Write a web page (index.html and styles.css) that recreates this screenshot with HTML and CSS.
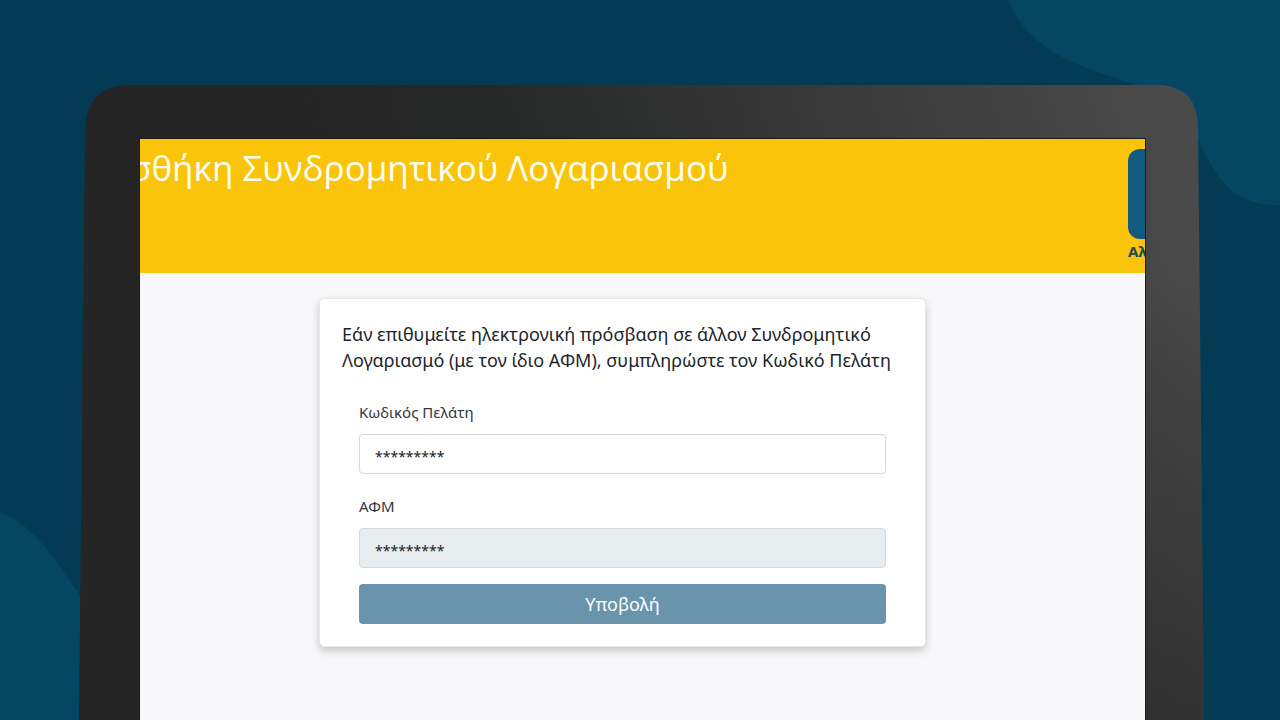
FILE: index.html
```
<!DOCTYPE html>
<html lang="el">
<head>
<meta charset="utf-8">
<meta name="viewport" content="width=device-width, initial-scale=1">
<title>Συνδρομητικός Λογαριασμός</title>
<link rel="stylesheet" href="styles.css">
</head>
<body>
<div class="stage">
  <svg class="backdrop" viewBox="0 0 1280 720" preserveAspectRatio="xMidYMin slice" aria-hidden="true">
    <path fill="#054763" d="M1008 0C1022 34 1050 54 1087 68C1120 81 1146 84 1170 104C1192 121 1199 144 1212 166C1226 190 1245 206 1280 205V0Z"/>
    <path fill="#054763" d="M0 512C25 522 43 542 58 564L79 594L110 640V720H0Z"/>
  </svg>
  <div class="device">
    <svg class="bezel" viewBox="0 0 1125 635" preserveAspectRatio="none" aria-hidden="true">
      <defs>
        <linearGradient id="bezel-fill" gradientUnits="userSpaceOnUse" x1="250" y1="160" x2="1050" y2="-90">
          <stop offset="0" stop-color="#252525"/>
          <stop offset="0.25" stop-color="#272828"/>
          <stop offset="0.7" stop-color="#3d3d3d"/>
          <stop offset="1" stop-color="#4a4a4a"/>
        </linearGradient>
        <linearGradient id="bezel-shade" x1="0" y1="0" x2="0" y2="1">
          <stop offset="0" stop-color="#252525" stop-opacity="0"/>
          <stop offset="0.3" stop-color="#252525" stop-opacity="0"/>
          <stop offset="1" stop-color="#252525" stop-opacity="0.55"/>
        </linearGradient>
      </defs>
      <path fill="url(#bezel-fill)" d="M46 0H1080Q1119 2 1119 43L1125 635H0L6 45Q7 3 46 0Z"/>
      <path fill="url(#bezel-shade)" d="M46 0H1080Q1119 2 1119 43L1125 635H0L6 45Q7 3 46 0Z"/>
    </svg>
    <div class="screen">
      <header class="banner">
        <h1 class="title">σθήκη Συνδρομητικού Λογαριασμού</h1>
        <button class="action" type="button"><span class="tile"></span><span class="action-label">Αλ</span></button>
      </header>
      <main class="content">
        <form class="card">
          <p class="intro">Εάν επιθυμείτε ηλεκτρονική πρόσβαση σε άλλον Συνδρομητικό Λογαριασμό (με τον ίδιο ΑΦΜ), συμπληρώστε τον Κωδικό Πελάτη</p>
          <div class="fields">
            <label class="label" for="code">Κωδικός Πελάτη</label>
            <input class="input" id="code" type="text" value="*********">
            <label class="label label-next" for="afm">ΑΦΜ</label>
            <input class="input input-locked" id="afm" type="text" value="*********" readonly>
            <button class="submit" type="button">Υποβολή</button>
          </div>
        </form>
      </main>
    </div>
  </div>
</div>
</body>
</html>
```
FILE: styles.css
```
* { box-sizing: border-box; }

body {
  margin: 0;
  font-family: "Noto Sans", "Open Sans", sans-serif;
  color: #212529;
  background: #033b55;
}

.stage {
  position: relative;
  display: flex;
  min-height: 100vh;
  padding: 85px 76px 0 79px;
  overflow: hidden;
}

.backdrop,
.bezel {
  position: absolute;
  inset: 0;
  width: 100%;
  height: 100%;
}

.device {
  position: relative;
  flex: 1;
  display: flex;
  min-width: 0;
  padding: 54px 59px 0 61px;
}

.screen {
  position: relative;
  flex: 1;
  min-width: 0;
  overflow: hidden;
  background: #f8f8fb;
  box-shadow: 0 0 0 1px #1c1a16;
}

.banner {
  display: flex;
  justify-content: space-between;
  align-items: flex-start;
  height: 134px;
  padding-top: 10px;
  background: #f9c409;
}

.title {
  margin: 0 0 0 -10px;
  font-family: "Open Sans", "Noto Sans", sans-serif;
  font-size: 35px;
  line-height: 38px;
  font-weight: 400;
  white-space: nowrap;
  color: #fffef2;
}

.action {
  display: flex;
  flex-direction: column;
  flex: none;
  gap: 2px;
  width: 90px;
  margin-right: -73px;
  padding: 0;
  border: 0;
  background: none;
  font-family: inherit;
  text-align: left;
  color: #1b4a5c;
}

.tile {
  height: 90px;
  border-radius: 12px;
  background: #115b80;
}

.action-label {
  font-size: 15px;
  line-height: 20px;
  font-weight: 700;
}

.content {
  display: flex;
  justify-content: center;
  padding: 25px 40px 40px 0;
}

.card {
  width: 100%;
  max-width: 607px;
  padding: 22px;
  border: 1px solid #e6e7e8;
  border-radius: 5px;
  background: #fff;
  box-shadow: 0 4px 8px rgba(0, 0, 0, 0.2);
}

.intro {
  margin: 0;
  font-size: 18px;
  line-height: 26px;
}

.fields {
  display: flex;
  flex-direction: column;
  padding: 27px 17px 0 17px;
}

.label {
  margin-bottom: 10px;
  font-size: 15px;
  line-height: 24px;
  color: #33373a;
}

.label-next { margin-top: 20px; }

.input {
  width: 100%;
  height: 40px;
  padding: 4px 15px 0;
  border: 1px solid #d3dadd;
  border-radius: 4px;
  background: #fff;
  font-family: inherit;
  font-size: 14px;
  color: #212529;
}

.input-locked { background: #e8edf0; }

.submit {
  height: 40px;
  margin-top: 16px;
  padding: 0;
  border: 0;
  border-radius: 4px;
  background: #6994ac;
  font-family: inherit;
  font-size: 18px;
  color: #fff;
}
```
